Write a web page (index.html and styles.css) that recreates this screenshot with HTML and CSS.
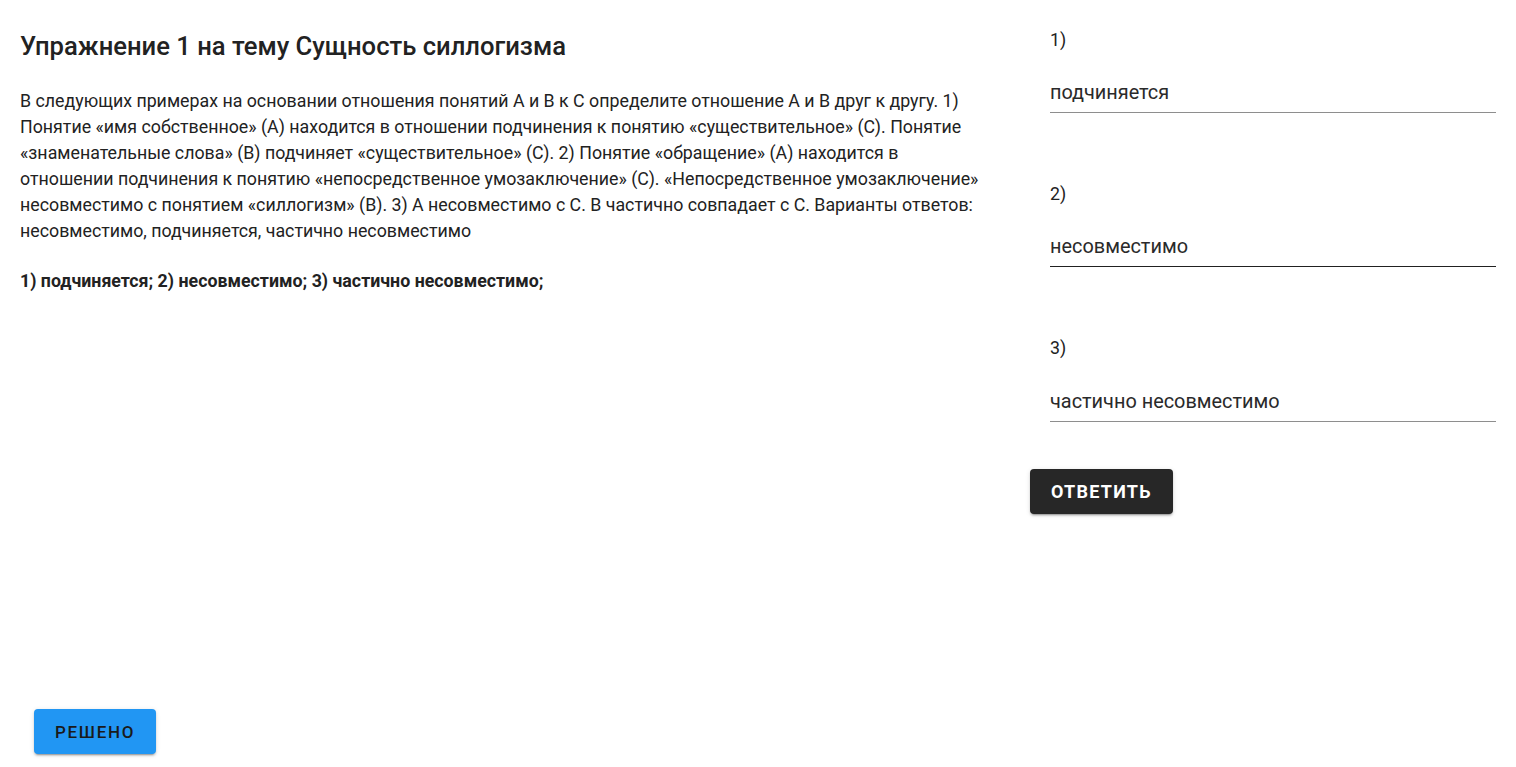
FILE: index.html
```html
<!DOCTYPE html>
<html lang="ru">
<head>
<meta charset="utf-8">
<title>Упражнение 1</title>
<link rel="stylesheet" href="styles.css">
</head>
<body>
<div class="page">
  <main class="left">
    <h1 class="title">Упражнение 1 на тему Сущность силлогизма</h1>
    <p class="task">В следующих примерах на основании отношения понятий А и В к С определите отношение А и В друг к другу. 1) Понятие «имя собственное» (А) находится в отношении подчинения к понятию «существительное» (С). Понятие «знаменательные слова» (В) подчиняет «существительное» (С). 2) Понятие «обращение» (А) находится в отношении подчинения к понятию «непосредственное умозаключение» (С). «Непосредственное умозаключение» несовместимо с понятием «силлогизм» (В). 3) А несовместимо с С. В частично совпадает с С. Варианты ответов: несовместимо, подчиняется, частично несовместимо</p>
    <p class="answer">1) подчиняется; 2) несовместимо; 3) частично несовместимо;</p>
  </main>
  <aside class="right">
    <div class="field">
      <div class="label">1)</div>
      <div class="input">подчиняется</div>
    </div>
    <div class="field">
      <div class="label">2)</div>
      <div class="input input-active">несовместимо</div>
    </div>
    <div class="field field-last">
      <div class="label">3)</div>
      <div class="input">частично несовместимо</div>
    </div>
    <button class="btn btn-dark">Ответить</button>
  </aside>
</div>
<footer class="footer">
  <button class="btn btn-blue">Решено</button>
</footer>
</body>
</html>
```

FILE: styles.css
```css
* { box-sizing: border-box; }
html, body { margin: 0; padding: 0; background: #fff; }
body {
  font-family: Roboto, "Noto Sans", Arial, sans-serif;
  color: #222;
  height: 767px;
  display: flex;
  flex-direction: column;
}
.page {
  display: grid;
  grid-template-columns: 1010px 1fr;
  flex: 1;
}
.left {
  padding: 30px 20px 0 20px;
}
.title {
  margin: 0;
  font-size: 25.6px;
  line-height: 32px;
  font-weight: 500;
  letter-spacing: 0;
}
.task {
  margin: 26px 0 0 0;
  font-size: 17.8px;
  line-height: 26px;
  padding-right: 10px;
}
.answer {
  margin: 24px 0 0 0;
  font-size: 17.8px;
  line-height: 26px;
  font-weight: 700;
}
.right {
  padding: 27px 20px 0 20px;
}
.field {
  padding-left: 20px;
  margin-bottom: 68px;
}
.field-last {
  margin-bottom: 47px;
}
.label {
  font-size: 17.8px;
  line-height: 26px;
}
.input {
  margin-top: 26px;
  font-size: 19.9px;
  line-height: 28px;
  padding-bottom: 5px;
  color: #2a2a2a;
  border-bottom: 1px solid #8e8e8e;
}
.field-last .input {
  margin-top: 27px;
}
.input-active {
  border-bottom-color: #212121;
}
.btn {
  font-family: Roboto, "Noto Sans", Arial, sans-serif;
  border: 0;
  border-radius: 4px;
  text-transform: uppercase;
  font-size: 18px;
  font-weight: 700;
  letter-spacing: 0.07em;
  height: 45px;
  padding: 0 21px;
  box-shadow: 0 3px 1px -2px rgba(0,0,0,.2), 0 2px 2px 0 rgba(0,0,0,.14), 0 1px 5px 0 rgba(0,0,0,.12);
}
.btn-dark {
  background: #272727;
  color: #fff;
}
.btn-blue {
  background: #2196f3;
  color: #1a1a1a;
  font-size: 17px;
  font-weight: 500;
  letter-spacing: 0.1em;
}
.footer {
  padding: 0 0 13px 34px;
}
```
